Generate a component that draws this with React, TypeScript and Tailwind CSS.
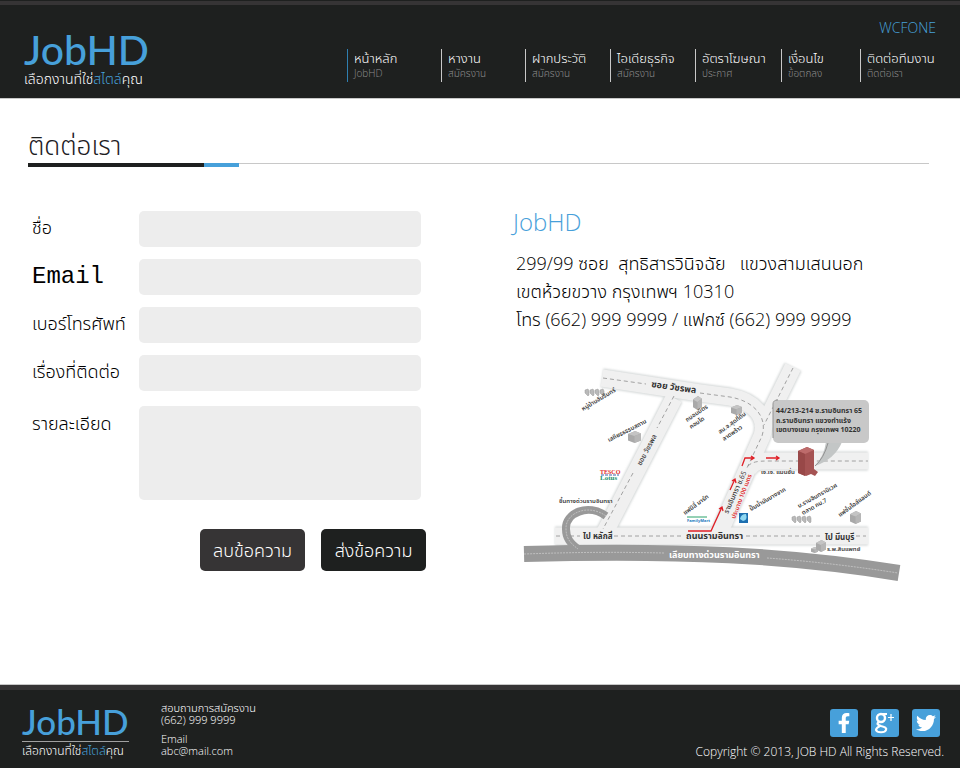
import { FaFacebookF, FaTwitter } from "react-icons/fa";

const thai = "font-['Open_Sans','Noto_Sans_Thai',sans-serif]";

const navItems = [
  { title: "หน้าหลัก", note: "JobHD", active: true },
  { title: "หางาน", note: "สมัครงาน" },
  { title: "ฝากประวัติ", note: "สมัครงาน" },
  { title: "ไอเดียธุรกิจ", note: "สมัครงาน" },
  { title: "อัตราโฆษณา", note: "ประกาศ" },
  { title: "เงื่อนไข", note: "ข้อตกลง" },
  { title: "ติดต่อทีมงาน", note: "ติดต่อเรา" },
];

const fields = [
  { id: "name", label: "ชื่อ", type: "text" },
  { id: "email", label: "Email", type: "email" },
  { id: "phone", label: "เบอร์โทรศัพท์", type: "tel" },
  { id: "subject", label: "เรื่องที่ติดต่อ", type: "text" },
];

function Tagline({ className }: { className: string }) {
  return (
    <p className={`whitespace-nowrap font-light text-white ${className}`}>
      เลือกงานที่ใช่<span className="text-[#47a0da]">สไตล์</span>คุณ
    </p>
  );
}

function Header() {
  return (
    <header className="flex h-[94px] justify-between border-b border-[#c8c8c8] bg-[#1e201f] px-6">
      <div className="pt-6">
        <p className="[font-family:Lato,sans-serif] text-[41px] leading-[42px] font-medium text-[#47a0da]">JobHD</p>
        <Tagline className="text-sm leading-4" />
      </div>
      <div className="flex flex-col pt-[13px]">
        <a href="#account" className="self-end text-sm leading-5 font-light text-[#47a0da]">
          WCFONE
        </a>
        <nav className="mt-[11px] grid grid-cols-[94px_84px_85px_85px_86px_79px_76px]">
          {navItems.map((item) => (
            <a
              key={item.title}
              href="#menu"
              className={`flex h-[33px] flex-col border-l pl-[6px] whitespace-nowrap ${item.active ? "border-[#2f7fb0]" : "border-[#c8c8c8]"}`}
            >
              <span className="text-[13px] leading-[18px] font-light text-white">{item.title}</span>
              <span className="text-[10px] leading-3 font-light text-[#8c8c8c]">{item.note}</span>
            </a>
          ))}
        </nav>
      </div>
    </header>
  );
}

function ContactForm() {
  const box = "rounded-[5px] bg-[#ededed] px-3 text-base outline-none";
  return (
    <form className="w-[394px] pt-11" onSubmit={(e) => e.preventDefault()}>
      <div className="grid grid-cols-[107px_282px] gap-y-3">
        {fields.map((f) => (
          <div key={f.id} className="contents">
            <label
              htmlFor={f.id}
              className={`self-center whitespace-nowrap text-black ${f.id === "email" ? "font-['Liberation_Mono',monospace] text-2xl leading-8" : "pb-1 text-lg leading-7 font-light"}`}
            >
              {f.label}
            </label>
            <input id={f.id} type={f.type} className={`h-9 ${box}`} />
          </div>
        ))}
        <label htmlFor="detail" className="pt-1.5 text-lg leading-7 font-light text-black">
          รายละเอียด
        </label>
        <textarea id="detail" className={`mt-[3px] h-[94px] resize-none py-2 ${box}`} />
      </div>
      <div className="mt-[29px] flex justify-end gap-4">
        <button type="reset" className="h-[42px] w-[105px] rounded-[5px] bg-[#363435] text-lg font-light text-white">
          ลบข้อความ
        </button>
        <button type="submit" className="h-[42px] w-[105px] rounded-[5px] bg-[#1e201f] text-lg font-light text-white">
          ส่งข้อความ
        </button>
      </div>
    </form>
  );
}

const roads = [
  "M602 378 L700 393 L730 397 C754 401 768 417 762 436 L718 536",
  "M793 367 L762 430",
  "M748 470 C752 462 757 461 768 461 L868 461",
  "M674 398 L603 536",
  "M555 536 L868 536",
];

function Cube({ x, y, w, h }: { x: number; y: number; w: number; h: number }) {
  return (
    <g transform={`translate(${x} ${y})`}>
      <path d={`M0 ${h * 0.25} L${w * 0.55} 0 L${w} ${h * 0.2} L${w} ${h * 0.8} L${w * 0.5} ${h} L0 ${h * 0.8} Z`} fill="#a9a9a9" />
      <path d={`M0 ${h * 0.25} L${w * 0.55} 0 L${w} ${h * 0.2} L${w * 0.5} ${h * 0.42} Z`} fill="#c4c4c4" />
      <path d={`M${w * 0.5} ${h * 0.42} L${w} ${h * 0.2} L${w} ${h * 0.8} L${w * 0.5} ${h} Z`} fill="#b6b6b6" />
    </g>
  );
}

function Houses({ x, y }: { x: number; y: number }) {
  return (
    <g transform={`translate(${x} ${y})`}>
      {[0, 5, 10, 15].map((dx) => (
        <path key={dx} d={`M${dx} 0 l3 -1 l1 2 l0 4 l-1 1 l-3 -3 z`} fill="#b9b9b9" stroke="#9a9a9a" strokeWidth="0.5" />
      ))}
    </g>
  );
}

function MapLabel({ x, y, r = 0, size = 7, fill = "#333", weight = 500, children }: { x: number; y: number; r?: number; size?: number; fill?: string; weight?: number; children: string }) {
  return (
    <text transform={`translate(${x} ${y}) rotate(${r})`} fontSize={size} fill={fill} fontWeight={weight}>
      {children}
    </text>
  );
}

function LocationMap() {
  return (
    <svg viewBox="520 356 384 232" className="mt-[23px] ml-[7px] block w-96" role="img" aria-label="แผนที่">
      <defs>
        <filter id="glow" x="-10%" y="-10%" width="120%" height="120%">
          <feGaussianBlur stdDeviation="1.2" />
        </filter>
      </defs>
      <g fill="none" stroke="#d3d7d7" strokeWidth="19" filter="url(#glow)">
        {roads.map((d) => <path key={d} d={d} />)}
      </g>
      <g fill="none" stroke="#f0f0f0" strokeWidth="17">
        {roads.map((d) => <path key={d} d={d} />)}
      </g>
      <g fill="none" stroke="#8d8d8d" strokeWidth="0.8" strokeDasharray="4 3">
        <path d="M603 378 L646 384 M700 393 L730 397 C754 401 768 417 762 436 L746 470" />
        <path d="M793 368 L764 425" />
        <path d="M748 466 C752 462 757 461 768 461 L868 461" />
        <path d="M674 396 L657 428 M633 473 L603 529" />
        <path d="M556 536 L580 536 M614 536 L683 536 M746 536 L823 536 M856 536 L866 536" />
      </g>
      <path d="M524 554 C680 550 790 555 899 573" fill="none" stroke="#999" strokeWidth="16" />
      <path d="M606 516 C588 503 565 513 566 529 C566 538 570 543 578 549" fill="none" stroke="#999" strokeWidth="8" />
      <g fill="none" stroke="#d8d8d8" strokeWidth="0.6" strokeDasharray="2 1">
        <path d="M524 554 C580 552 620 552 664 553 M767 558 C810 561 860 567 898 573" />
        <path d="M606 516 C588 503 565 513 566 529 C566 538 570 543 578 549" />
      </g>

      <Houses x={585} y={390} />
      <Houses x={792} y={517} />
      <Cube x={628} y={431} w={13} h={12} />
      <Cube x={693} y={396} w={9} h={14} />
      <Cube x={731} y={405} w={11} h={10} />
      <Cube x={850} y={511} w={11} h={13} />
      <Cube x={811} y={547} w={7} h={6} />
      <Cube x={816} y={540} w={10} h={12} />

      <path d="M826 442 Q824 456 815 466 Q835 459 842 442 Z" fill="#c3c6c6" />
      <rect x="773" y="400" width="96" height="43" rx="5" fill="#c8c8c8" />
      <path d="M773 438 V404 Q773 400 778 400 M828 443 Q824 458 815 466" fill="none" stroke="#929292" strokeWidth="1" />
      <MapLabel x={776} y={413} weight={700}>44/213-214 ซ.รามอินทรา 65</MapLabel>
      <MapLabel x={776} y={423} weight={700}>ถ.รามอินทรา แขวงท่าแร้ง</MapLabel>
      <MapLabel x={776} y={432} weight={700}>เขตบางเขน กรุงเทพฯ 10220</MapLabel>

      <path d="M798 451 L807 447 L814 450 V469 L818 472 L815 476 L811 474 L806 476 L798 473 Z" fill="#a55353" />
      <path d="M798 451 L807 447 L814 450 L805 454 Z" fill="#bd6b6b" />
      <path d="M798 451 L805 454 V476 L798 473 Z" fill="#984848" />

      <g fill="none" stroke="#e01f26" strokeWidth="1.3">
        <path d="M688 531 H711 L722 507 M719 509 L722 507 L723 511" />
        <path d="M730 490 L735 479 M732 481 L735 479 L736 483" />
        <path d="M742 466 L745 458 H753 M751 456 L754 458 L751 460" />
        <path d="M766 458 H778 M776 456 L779 458 L776 460" />
      </g>

      <MapLabel x={651} y={387} r={8} size={9} weight={700}>ซอย วัชรพล</MapLabel>
      <MapLabel x={641} y={466} r={-62}>ซอย วัชรพล</MapLabel>
      <MapLabel x={583} y={411} r={-31} size={6} weight={600}>หมู่บ้านอัมรินทร์</MapLabel>
      <MapLabel x={609} y={442} r={-27} size={6} weight={600}>เสถียรธรรมสถาน</MapLabel>
      <MapLabel x={687} y={422} r={-34} size={6} weight={600}>ถนอมมิตร</MapLabel>
      <MapLabel x={691} y={429} r={-34} size={6} weight={600}>คอนโด</MapLabel>
      <MapLabel x={720} y={434} r={-36} size={6} weight={600}>สน.จ.สุดที่ดิน</MapLabel>
      <MapLabel x={724} y={441} r={-34} size={6} weight={600}>ลาดพร้าว</MapLabel>
      <MapLabel x={728} y={514} r={-66}>รามอินทรา ซ.65</MapLabel>
      <MapLabel x={735} y={519} r={-69} size={6} weight={600} fill="#e01f26">ประมาณ 100 เมตร</MapLabel>
      <MapLabel x={761} y={474} size={6} weight={600}>เจ.เจ. แมนชั่น</MapLabel>
      <MapLabel x={559} y={503} size={6} weight={600}>ขึ้นทางด่วนรามอินทรา</MapLabel>
      <MapLabel x={685} y={515} r={-36} size={6} weight={600}>แฟมิลี่ มาร์ท</MapLabel>
      <MapLabel x={751} y={511} r={-30} size={6} weight={600}>ปั๊มน้ำมันบางจาก</MapLabel>
      <MapLabel x={799} y={508} r={-29} size={6} weight={600}>บ.รามอินทรานิเวศ</MapLabel>
      <MapLabel x={803} y={515} r={-29} size={6} weight={600}>ตลาด กม.7</MapLabel>
      <MapLabel x={840} y={517} r={-36} size={6} weight={600}>แฟชั่นไอส์แลนด์</MapLabel>
      <MapLabel x={583} y={539} size={8} weight={700}>ไป หลักสี่</MapLabel>
      <MapLabel x={686} y={539} size={9} weight={700}>ถนนรามอินทรา</MapLabel>
      <MapLabel x={825} y={540} size={8} weight={700}>ไป มีนบุรี</MapLabel>
      <MapLabel x={827} y={551} size={6} weight={600}>ร.พ.สินแพทย์</MapLabel>
      <MapLabel x={669} y={558} size={9} fill="#fff" weight={700}>เลียบทางด่วนรามอินทรา</MapLabel>

      <g fontFamily="Liberation Serif, serif" fontWeight="700">
        <text x="600" y="474" fontSize="6" fill="#e01f26">TESCO</text>
        <text x="600" y="480" fontSize="7" fill="#1b8f6b">Lotus</text>
      </g>
      <path d="M601 475 H619" stroke="#3b62a8" strokeWidth="1" strokeDasharray="3 1" />
      <path d="M687 517 H707" stroke="#2aa36b" strokeWidth="1" />
      <text x="687" y="522" fontSize="4" fontWeight="700" fill="#1d78bd">FamilyMart</text>
      <rect x="739" y="513" width="9" height="10" fill="#1d6fb0" />
      <path d="M740 519 Q741 514 746 514 Q748 520 743 521 Z" fill="#8fd8f2" />
    </svg>
  );
}

function Contact() {
  return (
    <section className="pl-[87px]">
      <h2 className="pt-[39px] text-2xl leading-8 font-light text-[#47a0da]">JobHD</h2>
      <address className="mt-[11px] pl-[3px] text-lg leading-7 font-light whitespace-pre text-black not-italic">
        <p>299/99 ซอย  สุทธิสารวินิจฉัย   แขวงสามเสนนอก</p>
        <p>เขตห้วยขวาง กรุงเทพฯ 10310</p>
        <p>โทร (662) 999 9999 / แฟกซ์ (662) 999 9999</p>
      </address>
      <LocationMap />
    </section>
  );
}

function GooglePlusIcon() {
  return (
    <svg viewBox="0 0 28 28" className="size-7" fill="none" stroke="currentColor" aria-hidden="true">
      <ellipse cx="10" cy="9" rx="4" ry="4" strokeWidth="2.4" />
      <path d="M11 5 H16" strokeWidth="2" />
      <path d="M8 13 C5 15 7 16 10 17 C14 18 16 19 15 21 C14 24 6 24 5 21 C5 19 7 18 9 17" strokeWidth="2.2" />
      <path d="M20 5 V12 M17 8.500 H23" strokeWidth="1.2" />
    </svg>
  );
}

function Footer() {
  const tile = "flex size-7 items-center justify-center rounded-[3px] bg-[#47a0da] text-white";
  return (
    <footer className="mt-auto flex h-[84px] justify-between border-t border-[#c8c8c8] bg-[#1e201f] pr-4 pl-[22px] shadow-[inset_0_5px_0_#363435]">
      <div className="flex gap-8">
        <div className="w-[107px] pt-4">
          <p className="[font-family:Lato,sans-serif] text-[35px] leading-10 font-medium text-[#47a0da]">JobHD</p>
          <Tagline className="border-t border-[#a0a0a0] text-xs leading-[18px]" />
        </div>
        <div className="pt-[17px] text-[11px] leading-3 font-light text-white">
          <p>สอบถามการสมัครงาน</p>
          <p>(662) 999 9999</p>
          <p className="mt-[7px]">Email</p>
          <p>abc@mail.com</p>
        </div>
      </div>
      <div className="flex flex-col items-end pt-6">
        <div className="flex gap-[13px] pr-1">
          <a href="#facebook" aria-label="Facebook" className={tile}>
            <FaFacebookF size={20} />
          </a>
          <a href="#google" aria-label="Google+" className={tile}>
            <GooglePlusIcon />
          </a>
          <a href="#twitter" aria-label="Twitter" className={tile}>
            <FaTwitter size={20} />
          </a>
        </div>
        <p className="mt-[7px] text-xs leading-4 font-light whitespace-nowrap text-white">
          Copyright © 2013, JOB HD All Rights Reserved.
        </p>
      </div>
    </footer>
  );
}

export default function App() {
  return (
    <div className={`flex min-h-screen flex-col bg-white ${thai}`}>
      <div className="h-px bg-[#1e201f]" />
      <div className="h-1 bg-[#363435]" />
      <Header />
      <main className="pr-[31px] pl-7">
        <h1 className="pt-[30px] pb-[2px] text-[26px] leading-8 font-light text-[#1e201f]">ติดต่อเรา</h1>
        <div className="flex h-1">
          <div className="w-44 bg-[#1e201f]" />
          <div className="w-[35px] bg-[#47a0da]" />
          <div className="h-px flex-1 bg-[#c8c8c8]" />
        </div>
        <div className="flex pl-1">
          <ContactForm />
          <Contact />
        </div>
      </main>
      <Footer />
    </div>
  );
}
